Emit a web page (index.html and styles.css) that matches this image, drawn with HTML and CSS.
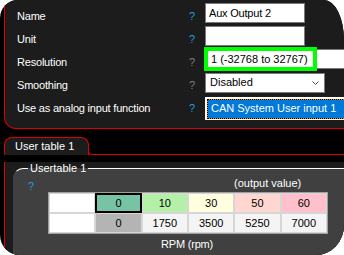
FILE: index.html
```html
<!DOCTYPE html>
<html>
<head>
<meta charset="utf-8">
<link rel="stylesheet" href="styles.css">
</head>
<body>
<div class="window">
  <div class="props">
    <div class="labels">
      <div class="label">Name</div>
      <div class="label">Unit</div>
      <div class="label">Resolution</div>
      <div class="label">Smoothing</div>
      <div class="label">Use as analog input function</div>
    </div>
    <div class="helps">
      <div class="help blue">?</div>
      <div class="help blue">?</div>
      <div class="help gray">?</div>
      <div class="help gray">?</div>
      <div class="help blue">?</div>
    </div>
    <div class="fields">
      <div class="textbox f-name">Aux Output 2</div>
      <div class="textbox f-unit"></div>
      <div class="textbox f-res">1 (-32768 to 32767)<div class="highlight"></div></div>
      <div class="dropdown">
        <span>Disabled</span>
        <svg class="chev" width="7" height="5" viewBox="0 0 7 5"><polyline points="0.5,0.5 3.5,3.5 6.5,0.5" fill="none" stroke="#505050" stroke-width="1"/></svg>
      </div>
      <div class="combo-active"><div class="sel">CAN System User input 1</div></div>
    </div>
  </div>

  <div class="tabs">
    <div class="tab">User table 1</div>
    <div class="tab-rest"></div>
  </div>
  <div class="tab-page">
    <fieldset class="group">
      <legend>Usertable 1</legend>
      <div class="group-body">
        <div class="g-help">?</div>
        <div class="caption">(output value)</div>
        <div class="spacer"></div>
        <table class="utable">
          <tr>
            <td class="c-white"></td>
            <td class="c-teal selected">0</td>
            <td class="c-green">10</td>
            <td class="c-yellow">30</td>
            <td class="c-rose">50</td>
            <td class="c-pink">60</td>
          </tr>
          <tr>
            <td class="c-white"></td>
            <td class="c-gray">0</td>
            <td class="c-light">1750</td>
            <td class="c-light">3500</td>
            <td class="c-light">5250</td>
            <td class="c-light">7000</td>
          </tr>
        </table>
        <div class="spacer"></div>
        <div class="axis">RPM (rpm)</div>
      </div>
    </fieldset>
  </div>
</div>
</body>
</html>
```
FILE: styles.css
```css
* { box-sizing: border-box; }
html, body { margin: 0; padding: 0; background: #fff; }
body { font-family: "Liberation Sans", Arial, sans-serif; font-size: 11px; }

.window {
  width: 344px;
  height: 255px;
  overflow: hidden;
  background: #000;
  border-radius: 18px 20px 28px 20px / 18px 40px 30px 20px;
}

/* upper property panel */
.props {
  width: 420px;
  height: 129px;
  margin-left: 4px;
  background: #1c1c1c;
  border: 1px solid #e00000;
  border-top: 0;
  border-bottom-left-radius: 12px;
  padding-left: 12px;
  display: flex;
}
.labels { width: 172px; padding-top: 5px; letter-spacing: -0.2px; }
.helps { width: 16px; padding-top: 5px; }
.label, .help { height: 23px; line-height: 23px; color: #fff; white-space: nowrap; }
.help.blue { color: #1e9be6; }
.help.gray { color: #7f7f7f; }

.fields { display: flex; flex-direction: column; padding-top: 3px; }
.textbox {
  height: 20px;
  background: #fff;
  border: 1px solid #7a7a7a;
  line-height: 18px;
  color: #000;
  padding-left: 3px;
  white-space: nowrap;
}
.f-name { letter-spacing: -0.2px; }
.f-name, .f-unit { width: 100px; }
.f-unit { margin-top: 3px; }
.f-res { width: 200px; margin-top: 3px; padding-left: 5px; position: relative; }
.highlight {
  position: absolute;
  left: -2px;
  top: -3px;
  width: 113px;
  height: 24px;
  border: 4px solid #00ff00;
}
.dropdown {
  width: 120px;
  height: 20px;
  margin-top: 4px;
  background: #fff;
  border: 1px solid #7a7a7a;
  line-height: 17px;
  padding: 0 5px 0 4px;
  display: flex;
  justify-content: space-between;
  align-items: center;
}
.dropdown span { line-height: 17px; align-self: flex-start; }
.combo-active {
  width: 200px;
  height: 23px;
  margin-top: 4px;
  background: #fff;
  padding: 2px 0 1px 2px;
}
.sel {
  height: 20px;
  border: 1px dotted #000;
  background: linear-gradient(#0078d7, #0078d7) padding-box, #f08a24 border-box;
  color: #fff;
  line-height: 16px;
  padding-left: 3px;
  white-space: nowrap;
}

/* tabs */
.tabs { display: flex; margin: 8px 0 0 4px; height: 18px; }
.tab {
  width: 85px;
  height: 18px;
  border: 1px solid #e00000;
  border-bottom: 0;
  border-radius: 8px 8px 0 0;
  background: #1c1c1c;
  color: #fff;
  line-height: 16px;
  padding-left: 10px;
  white-space: nowrap;
}
.tab-rest {
  flex: 1;
  align-self: flex-end;
  height: 8px;
  margin-left: -1px;
  border-left: 1px solid #e00000;
  border-bottom: 1px solid #e00000;
  border-bottom-left-radius: 4px;
}
.tab-page {
  margin-left: 4px;
  height: 110px;
  background: #1c1c1c;
  border-left: 1px solid #e00000;
  padding-left: 8px;
}

/* group box */
.group {
  margin: 7px 0 0 0;
  padding: 0;
  min-width: 0;
  width: 360px;
  height: 120px;
  background: #404040;
  border: 1px solid #fff;
  border-left-color: #404040;
  border-right: 0;
  border-bottom: 0;
  border-top-left-radius: 10px;
}
.group legend {
  margin-left: 14px;
  padding: 0 2px;
  color: #fff;
  line-height: 13px;
}
.group-body {
  display: grid;
  grid-template-columns: 34px 280px;
  grid-template-rows: 17px auto auto;
}
.g-help {
  color: #1e9be6;
  padding: 6px 0 0 14px;
  line-height: 11px;
}
.caption {
  color: #fff;
  padding: 2px 0 0 186px;
  line-height: 13px;
  white-space: nowrap;
}
.utable {
  border-collapse: separate;
  border-spacing: 0;
  border: 1px solid #a0a0a0;
  table-layout: fixed;
}
.utable td {
  width: 46px;
  height: 17px;
  padding: 1px 0 0;
  line-height: 17px;
  border: 1px solid #d6d6d6;
  text-align: center;
  color: #000;
}
.selected { outline: 2px solid #000; outline-offset: -2px; }
.c-white { background: #fff; }
.c-teal { background: #77c3a5; }
.c-green { background: #b4f0a8; }
.c-yellow { background: #ffffe0; }
.c-rose { background: #ffd6d0; }
.c-pink { background: #ffc0cb; }
.c-gray { background: #b4b4b4; }
.c-light { background: #f4f4f4; }
.axis {
  text-align: center;
  color: #fff;
  line-height: 13px;
  padding-top: 4px;
  width: 278px;
  letter-spacing: -0.2px;
}
```
